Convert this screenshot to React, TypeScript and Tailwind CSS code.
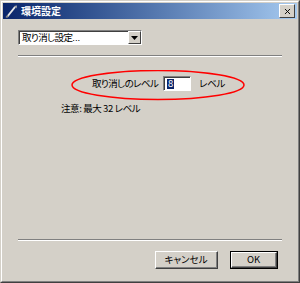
import { X } from 'lucide-react';

const font = { fontFamily: '"Noto Sans CJK JP", "Liberation Sans", sans-serif' };

function Separator() {
  return (
    <div className="h-[2px] border-t border-[#808080] border-b border-b-white" />
  );
}

function Button({ label, primary }: { label: string; primary?: boolean }) {
  return (
    <div className={`h-[18px] ${primary ? 'w-[48px] border border-black' : 'w-[63px]'}`}>
      <div className="h-full border-t border-l border-white border-r border-b border-r-[#404040] border-b-[#404040]">
        <div className="h-full flex items-center justify-center border-r border-b border-[#808080] text-[9.5px] leading-none text-black [font-feature-settings:'palt']">
          {label}
        </div>
      </div>
    </div>
  );
}

export default function App() {
  return (
    <div className="w-[300px] h-[283px] bg-[#d4d0c8] overflow-hidden" style={font}>
      <div className="h-full border-t border-l border-[#d4d0c8] border-r border-b border-r-[#404040] border-b-[#404040]">
        <div className="h-full border-t border-l border-white border-r border-b border-r-[#808080] border-b-[#808080] p-px flex flex-col">
          {/* Title bar */}
          <div className="h-[16px] shrink-0 flex items-center bg-gradient-to-r from-[#0a246a] to-[#a6caf0] pl-[2px] pr-[2px]">
            <svg width="13" height="13" viewBox="0 0 13 13" className="shrink-0">
              <path d="M2 12 L10 2" stroke="#e8e8e8" strokeWidth="2" />
              <path d="M9 1 L12 0.5 L11.5 3.5 Z" fill="#b0b0b0" />
              <path d="M1 12.5 L3 10.5" stroke="#808080" strokeWidth="1.5" />
            </svg>
            <span className="ml-[3px] text-white font-bold text-[10px] leading-none">環境設定</span>
            <div className="ml-auto w-[16px] h-[14px] bg-[#d4d0c8] border-t border-l border-white border-r border-b border-r-[#404040] border-b-[#404040] flex items-center justify-center">
              <X className="w-[9px] h-[9px] text-black" strokeWidth={2.5} />
            </div>
          </div>

          {/* Body */}
          <div className="relative flex-1 flex flex-col pl-[15px] pr-[15px] pt-[11px] text-[9.5px] text-black [font-feature-settings:'palt']">
            {/* Dropdown */}
            <div className="w-[124px] h-[15px] bg-white border-t border-l border-[#808080] border-r border-b border-r-white border-b-white flex">
              <div className="flex-1 flex items-center pl-[2px] leading-none border-t border-l border-[#404040] tracking-[-0.6px] whitespace-nowrap">
                <span>取り消し設定</span>
                <span className="font-['Liberation_Sans'] tracking-normal">...</span>
              </div>
              <div className="w-[13px] h-full bg-[#d4d0c8] border-t border-l border-white border-r border-b border-r-[#404040] border-b-[#404040] flex items-center justify-center">
                <svg width="7" height="4" viewBox="0 0 7 4">
                  <path d="M0 0 H7 L3.5 4 Z" fill="black" />
                </svg>
              </div>
            </div>

            <div className="mt-[10px]">
              <Separator />
            </div>

            {/* Undo level row */}
            <div className="mt-[19px] h-[15px] flex items-center pl-[74px]">
              <span className="w-[61px] whitespace-nowrap tracking-[-0.6px]">取り消しのレベル</span>
              <div className="ml-[10px] w-[28px] h-[15px] bg-white border-t border-l border-[#808080] border-r border-b border-r-white border-b-white">
                <div className="h-full border-t border-l border-[#404040] flex items-center pl-[2px]">
                  <span className="bg-[#0a246a] text-white leading-none px-px">8</span>
                </div>
              </div>
              <span className="ml-[8px] tracking-[-0.3px]">レベル</span>
            </div>

            <div className="mt-[10px] pl-[43px] tracking-[-0.4px]">注意: 最大 32 レベル</div>

            {/* Ellipse highlight */}
            <svg className="absolute left-[65px] top-[51px] pointer-events-none" width="180" height="32" viewBox="0 0 180 32">
              <ellipse cx="90" cy="15" rx="86" ry="14.5" fill="none" stroke="#ff0000" strokeWidth="1.5" />
            </svg>

            <div className="mt-auto">
              <Separator />
              <div className="flex justify-end gap-[12px] pt-[10px] pb-[11px] pr-[4px]">
                <Button label="キャンセル" />
                <Button label="OK" primary />
              </div>
            </div>
          </div>
        </div>
      </div>
    </div>
  );
}
